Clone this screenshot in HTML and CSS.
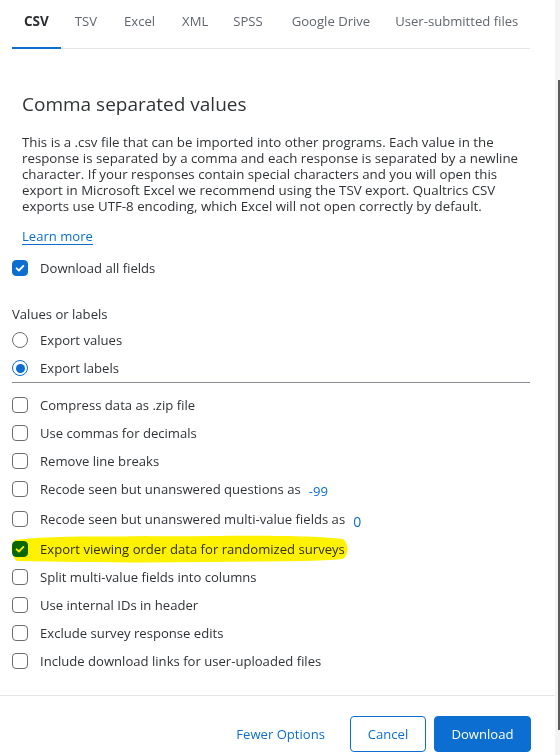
FILE: index.html
```html
<!DOCTYPE html>
<html lang="en">
<head>
<meta charset="utf-8">
<title>Export data</title>
<link rel="stylesheet" href="styles.css">
</head>
<body>
<div class="frame">
  <div class="panel">
    <nav class="tabs">
      <span class="tab active">CSV</span>
      <span class="tab">TSV</span>
      <span class="tab">Excel</span>
      <span class="tab">XML</span>
      <span class="tab">SPSS</span>
      <span class="tab">Google Drive</span>
      <span class="tab">User-submitted files</span>
    </nav>

    <section class="intro">
      <h1 class="title">Comma separated values</h1>
      <p class="desc">This is a .csv file that can be imported into other programs. Each value in the response is separated by a comma and each response is separated by a newline character. If your responses contain special characters and you will open this export in Microsoft Excel we recommend using the TSV export. Qualtrics CSV exports use UTF-8 encoding, which Excel will not open correctly by default.</p>
      <a class="learn" href="#">Learn more</a>
    </section>

    <div class="row first-check">
      <span class="box checked"><svg viewBox="0 0 16 16" width="16" height="16"><path d="M4.6 8.3l2.3 2.2 4.5-4.6" fill="none" stroke="#fff" stroke-width="1.8" stroke-linecap="round" stroke-linejoin="round"/></svg></span>
      <span class="label">Download all fields</span>
    </div>

    <div class="group-title">Values or labels</div>
    <div class="row">
      <span class="radio"></span>
      <span class="label">Export values</span>
    </div>
    <div class="row">
      <span class="radio on"></span>
      <span class="label">Export labels</span>
    </div>
    <hr class="divider">

    <div class="options">
      <div class="row"><span class="box"></span><span class="label">Compress data as .zip file</span></div>
      <div class="row"><span class="box"></span><span class="label">Use commas for decimals</span></div>
      <div class="row"><span class="box"></span><span class="label">Remove line breaks</span></div>
      <div class="row"><span class="box"></span><span class="label">Recode seen but unanswered questions as</span><span class="val val-a">-99</span></div>
      <div class="row tall"><span class="box"></span><span class="label">Recode seen but unanswered multi-value fields as</span><span class="val val-b">0</span></div>
      <div class="row marked">
        <span class="box checked"><svg viewBox="0 0 16 16" width="16" height="16"><path d="M4.6 8.3l2.3 2.2 4.5-4.6" fill="none" stroke="#fff" stroke-width="1.8" stroke-linecap="round" stroke-linejoin="round"/></svg></span>
        <span class="label">Export viewing order data for randomized surveys</span>
        <svg class="marker" viewBox="0 0 340 30" width="340" height="30" preserveAspectRatio="none"><path d="M6 6 C40 1 120 3 200 2 C260 1 310 2 334 5 C340 10 340 20 334 25 C300 28 250 27 200 28 C130 29 60 28 8 27 C2 22 1 10 6 6 Z" fill="#fff200"/></svg>
      </div>
      <div class="row"><span class="box"></span><span class="label">Split multi-value fields into columns</span></div>
      <div class="row"><span class="box"></span><span class="label">Use internal IDs in header</span></div>
      <div class="row"><span class="box"></span><span class="label">Exclude survey response edits</span></div>
      <div class="row"><span class="box"></span><span class="label">Include download links for user-uploaded files</span></div>
    </div>

    <hr class="footer-line">
    <div class="actions">
      <a class="link-btn" href="#">Fewer Options</a>
      <button class="btn outline">Cancel</button>
      <button class="btn primary">Download</button>
    </div>
  </div>
  <div class="scrollbar"><div class="thumb"></div></div>
</div>
</body>
</html>
```
FILE: styles.css
```css
* { box-sizing: border-box; }
html, body { margin: 0; padding: 0; background: #fff; }
body {
  font-family: "Open Sans", "Noto Sans", sans-serif;
  font-size: 13.1px;
  color: #2f3337;
  overflow: hidden;
}
.frame { display: flex; width: 560px; height: 755px; }
.panel { width: 555px; flex: none; }
.scrollbar { width: 5px; background: #f4f4f4; display: flex; justify-content: flex-end; }
.thumb { width: 2px; height: 650px; margin-top: 80px; background: #5c5c5c; }

.tabs {
  display: flex;
  margin: 0 25px 0 12px;
  border-bottom: 1px solid #e2e4e6;
  height: 49px;
}
.tab {
  padding: 11px 12px 16px;
  line-height: 20px;
  height: 49px;
  color: #60666d;
  white-space: nowrap;
}
.tab.active {
  color: #2a2d31;
  font-weight: 700;
  font-size: 13.5px;
  border-bottom: 2px solid #0b6ed0;
}
.tab:nth-child(2) { padding-left: 14px; }
.tab:nth-child(3) { padding-left: 15px; }
.tab:nth-child(4) { padding-left: 15px; }
.tab:nth-child(5) { padding-left: 13px; }
.tab:nth-child(6) { padding-left: 17px; padding-right: 14px; }
.tab:nth-child(7) { padding-left: 11px; }

.intro { padding: 0 28px 0 22px; }
.title {
  margin: 41px 0 0;
  font-size: 19px;
  line-height: 28px;
  font-weight: 400;
  color: #2f3336;
}
.desc {
  margin: 16px 0 0;
  line-height: 16px;
  font-size: 13.3px;
}
.learn {
  display: inline-block;
  margin-top: 12px;
  line-height: 20px;
  color: #0b6ed0;
  text-decoration: underline;
  text-underline-offset: 3px;
}

.row {
  display: flex;
  align-items: center;
  height: 28px;
  padding-left: 12px;
  position: relative;
}
.row.tall { height: 32px; }
.first-check { margin-top: 8px; }
.label { margin-left: 12px; line-height: 20px; position: relative; z-index: 1; }
.box {
  width: 16px; height: 16px;
  border: 1.5px solid #6b6e72;
  border-radius: 4px;
  flex: none;
  display: flex;
  align-items: center;
  justify-content: center;
  position: relative;
  z-index: 1;
}
.box.checked { background: #0b6ed0; border-color: #0b6ed0; }
.box svg { display: block; margin: -1.5px; }
.radio {
  width: 16px; height: 16px;
  border: 1.5px solid #6b6e72;
  border-radius: 50%;
  flex: none;
  display: flex; align-items: center; justify-content: center;
}
.radio.on { border-color: #0b6ed0; }
.radio.on::after {
  content: "";
  width: 9px; height: 9px;
  border-radius: 50%;
  background: #0b6ed0;
}

.group-title { margin: 22px 0 2px 12px; line-height: 20px; }
.divider {
  margin: 0 25px 0 12px;
  border: 0;
  border-top: 1px solid #8a8d91;
  height: 0;
}
.options { margin-top: 8px; }
.val { color: #0b6ed0; position: relative; z-index: 1; }
.val-a { margin-left: 8px; top: 2px; }
.val-b { margin-left: 8px; top: 2px; font-size: 14px; }

.marked .marker {
  position: absolute;
  left: 9px;
  top: -1px;
  z-index: 2;
  mix-blend-mode: multiply;
}

.footer-line {
  margin: 20px 0 0;
  border: 0;
  border-top: 1px solid #e6e7e8;
  height: 0;
}
.actions {
  display: flex;
  justify-content: flex-end;
  align-items: center;
  margin-top: 20px;
  padding-right: 24px;
  gap: 8px;
}
.link-btn {
  color: #0b6ed0;
  text-decoration: none;
  margin-right: 17px;
  line-height: 20px;
}
.btn {
  height: 36px;
  border-radius: 4px;
  font-family: inherit;
  font-size: 13.1px;
  padding: 0;
  cursor: pointer;
}
.btn.outline {
  width: 76px;
  background: #fff;
  border: 1px solid #0b6ed0;
  color: #0b6ed0;
}
.btn.primary {
  width: 97px;
  background: #0b6ed0;
  border: 1px solid #0b6ed0;
  color: #fff;
}
```
